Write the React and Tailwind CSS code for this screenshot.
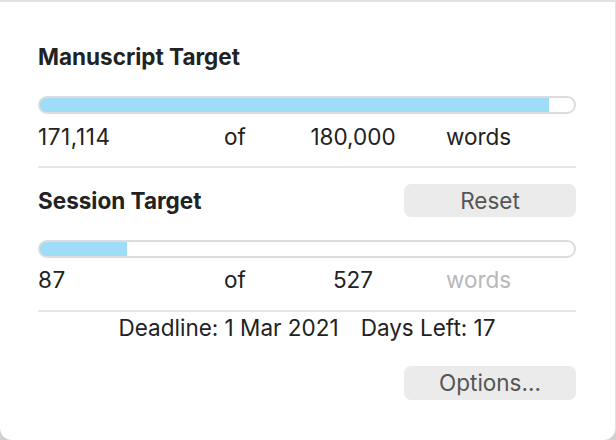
function ProgressBar({ pct }) {
  return (
    <div className="relative h-[18px] w-full rounded-full border-2 border-[#dcdcdc] bg-white overflow-hidden">
      <div
        className="absolute left-[-2px] top-[-2px] h-[18px] rounded-l-full border-2 border-r-0 border-[#7fbcd8] bg-[#9edcf9]"
        style={{ width: `calc(${pct}% + 2px)` }}
      />
    </div>
  );
}

function CountRow({ done, target, muted }) {
  return (
    <div className="flex h-[26px] items-center leading-[26px] text-[22.5px] text-[#222]">
      <span className="w-[186px] tracking-[0.6px]">{done}</span>
      <span className="w-[20px] text-center">of</span>
      <span className="w-[202px] pl-[16px] text-center">{target}</span>
      <span className={muted ? "text-[#b8b8b8]" : "text-[#222]"}>words</span>
    </div>
  );
}

export default function App() {
  return (
    <div className="h-[440px] w-[616px] bg-[#d0d0d0]" style={{ fontFamily: "Inter, 'Noto Sans', sans-serif" }}>
      <div className="h-full w-full rounded-b-[12px] border-t-2 border-r border-[#e2e2e2] bg-white pl-[38px] pr-[39px]">
        {/* Manuscript */}
        <h2 className="pt-[42px] text-[22.5px] font-bold leading-[26px] text-[#222]">Manuscript Target</h2>
        <div className="mt-[26px]">
          <ProgressBar pct={95.3} />
        </div>
        <div className="mt-[10px]">
          <CountRow done="171,114" target="180,000" />
        </div>
        <div className="mt-[16px] h-[2px] bg-[#e6e6e6]" />

        {/* Session */}
        <div className="mt-[16px] flex items-center justify-between">
          <h2 className="text-[22.5px] font-bold leading-[26px] text-[#222]">Session Target</h2>
          <button className="h-[33px] w-[172px] rounded-[7px] bg-[#ebebeb] text-[22.5px] text-[#555]">Reset</button>
        </div>
        <div className="mt-[23px]">
          <ProgressBar pct={16.2} />
        </div>
        <div className="mt-[9px]">
          <CountRow done="87" target="527" muted />
        </div>
        <div className="mt-[17px] h-[2px] bg-[#e6e6e6]" />

        <div className="mt-[3px] text-center text-[22.5px] leading-[26px] text-[#222]">
          Deadline: 1 Mar 2021<span className="inline-block w-[22px]" />Days Left: 17
        </div>

        <div className="mt-[25px] flex justify-end">
          <button className="h-[34px] w-[172px] rounded-[7px] bg-[#ebebeb] text-[22.5px] text-[#555]">Options...</button>
        </div>
      </div>
    </div>
  );
}
